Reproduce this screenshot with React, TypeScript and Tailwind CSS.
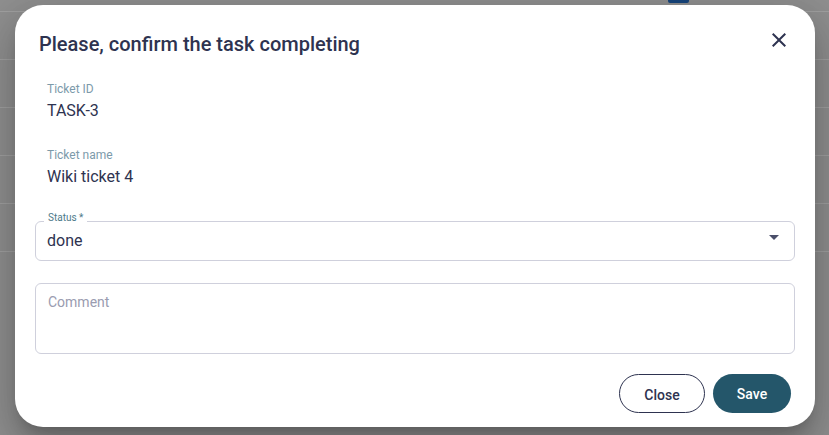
import React from "react";

export default function App() {
  const rows = [0, 1, 2, 3, 4];
  return (
    <div className="relative h-[435px] w-[829px] overflow-hidden bg-[#8f8f8f] font-['Roboto',sans-serif]">
      {/* background page */}
      <div className="flex h-[12px] border-b border-[#a0a0a0]">
        <div className="ml-[668px] h-[3px] w-[21px] rounded-b-[2px] bg-[#17457c]" />
      </div>
      {rows.map((r) => (
        <div key={r} className="h-[48px] border-b border-[#a0a0a0]" />
      ))}

      {/* dialog overlay */}
      <div className="absolute inset-0 flex items-start">
        <div className="ml-[15px] mt-[5px] flex h-[422px] w-[800px] flex-col rounded-[28px] bg-white shadow-[0_11px_15px_-7px_rgba(0,0,0,0.2),0_24px_38px_3px_rgba(0,0,0,0.14),0_9px_46px_8px_rgba(0,0,0,0.12)]">
          <div className="flex items-start justify-between pl-6 pr-6 pt-[23px]">
            <h2 className="mt-[2px] text-[20px] font-medium leading-7 text-[#2e3350]">
              Please, confirm the task completing
            </h2>
            <svg width="24" height="24" viewBox="0 0 24 24" className="text-[#2e3350]">
              <path
                fill="currentColor"
                d="M19 6.41 17.59 5 12 10.59 6.41 5 5 6.41 10.59 12 5 17.59 6.41 19 12 13.41 17.59 19 19 17.59 13.41 12z"
              />
            </svg>
          </div>

          <div className="flex flex-col px-5">
            <div className="mt-[23px] flex flex-col pl-3">
              <span className="text-[12px] leading-4 text-[#7c9aaa]">Ticket ID</span>
              <span className="mt-[2px] text-[16px] leading-6 text-[#2e3350]">TASK-3</span>
            </div>
            <div className="mt-[24px] flex flex-col pl-3">
              <span className="text-[12px] leading-4 text-[#7c9aaa]">Ticket name</span>
              <span className="mt-[2px] text-[16px] leading-6 text-[#2e3350]">Wiki ticket 4</span>
            </div>

            <div className="relative mt-[32px] flex h-[40px] items-center justify-between rounded-[6px] border border-[#cfd0dc] pl-[11px] pr-[15px]">
              <span className="absolute -top-[9px] left-[8px] bg-white px-[4px] text-[10px] leading-[10px] text-[#4d7a8a]">
                Status *
              </span>
              <span className="text-[16px] leading-6 text-[#2e3350]">done</span>
              <svg width="10" height="5" viewBox="0 0 10 5" className="mb-[7px] text-[#4a4f6a]">
                <path fill="currentColor" d="M0 0h10L5 5z" />
              </svg>
            </div>

            <div className="mt-[22px] h-[71px] rounded-[6px] border border-[#cfd0dc] pl-3 pt-[6px]">
              <span className="text-[14px] leading-5 text-[#9a9cb0]">Comment</span>
            </div>

            <div className="mt-[20px] flex justify-end gap-2 pr-1">
              <button className="flex h-[39px] w-[86px] items-center justify-center rounded-full border border-[#2e3350] bg-white pt-[3px] text-[14px] font-medium text-[#2e3350]">
                Close
              </button>
              <button className="flex h-[39px] w-[78px] items-center justify-center rounded-full bg-[#24566a] pt-[2px] text-[14px] font-medium text-white">
                Save
              </button>
            </div>
          </div>
        </div>
      </div>
    </div>
  );
}
